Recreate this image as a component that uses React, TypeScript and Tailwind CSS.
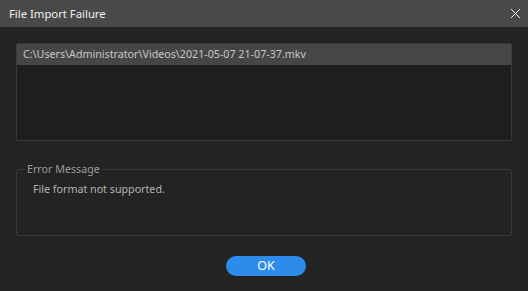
import { X } from "lucide-react";

export default function App() {
  return (
    <div
      className="w-[528px] h-[291px] flex flex-col bg-[#232323] overflow-hidden"
      style={{ fontFamily: '"Noto Sans", "Open Sans", sans-serif' }}
    >
      {/* title bar */}
      <div className="h-[27px] shrink-0 flex items-center justify-between bg-[#494949] pl-[9px] pr-[4px]">
        <span className="text-[11.3px] text-[#f0f0f0] leading-none">File Import Failure</span>
        <X size={17} strokeWidth={1.3} className="text-white" />
      </div>

      <div className="flex flex-col px-[16px] pt-[16px]">
        {/* file list */}
        <div className="h-[98px] border border-[#3a3a3a] bg-[#1e1e1e] rounded-[2px]">
          <div className="h-[21px] flex items-center bg-[#464646] pl-[6px] text-[10.7px] text-[#c6c6c6]">
            C:\Users\Administrator\Videos\2021-05-07 21-07-37.mkv
          </div>
        </div>

        {/* error message group */}
        <fieldset className="mt-[21px] h-[74px] border border-[#393939] rounded-[2px] pl-[16px] pr-[8px] min-w-0">
          <legend className="ml-[-8px] px-[2px] text-[10.7px] text-[#9c9c9c] leading-[14px]">
            Error Message
          </legend>
          <p className="mt-[5px] text-[10.7px] text-[#b4b4b4] leading-[16px]">File format not supported.</p>
        </fieldset>

        <div className="flex justify-center pt-[20px] pl-[4px]">
          <button className="w-[80px] h-[20px] rounded-full bg-[#2d8ceb] text-white text-[12.5px] leading-none">
            OK
          </button>
        </div>
      </div>
    </div>
  );
}
